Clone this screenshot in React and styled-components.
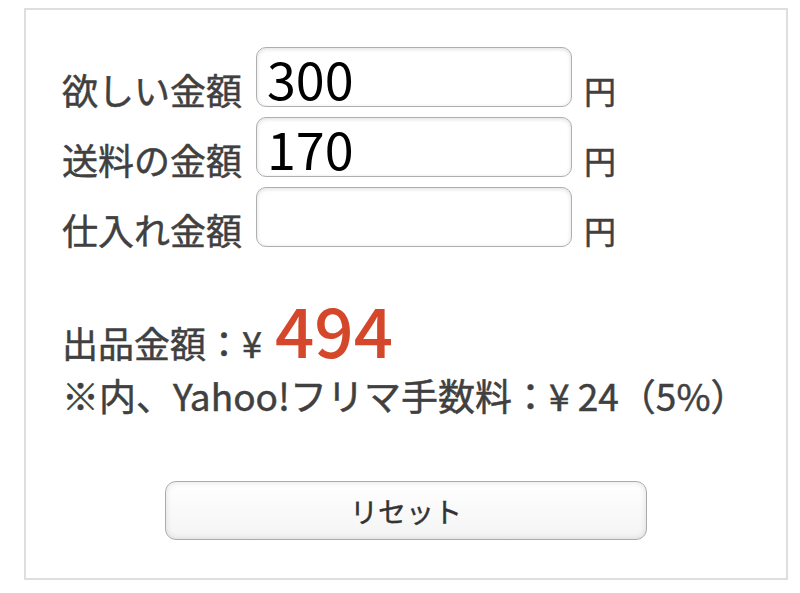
import React, { useState } from 'react';
import styled, { createGlobalStyle } from 'styled-components';

const GlobalStyle = createGlobalStyle`
body{
  margin: 8px 0 0 24px;
  background: #fff;
  font-family: "Noto Sans CJK JP", "Noto Sans", sans-serif;
}
`

function App() {
    const [want, setWant] = useState('300')
    const [ship, setShip] = useState('170')
    const [cost, setCost] = useState('')

    const w = Number(want) || 0
    const s = Number(ship) || 0
    const c = Number(cost) || 0
    const price = Math.floor((w + s + c) / 0.95)
    const fee = Math.floor(price * 0.05)

    const reset = () => { setWant(''); setShip(''); setCost('') }

    return (
        <Card>
            <GlobalStyle />
            <Row>
                <Label>欲しい金額</Label>
                <Field value={want} onChange={e => setWant(e.target.value)} />
                <Unit>円</Unit>
            </Row>
            <Row>
                <Label>送料の金額</Label>
                <Field value={ship} onChange={e => setShip(e.target.value)} />
                <Unit>円</Unit>
            </Row>
            <Row>
                <Label>仕入れ金額</Label>
                <Field value={cost} onChange={e => setCost(e.target.value)} />
                <Unit>円</Unit>
            </Row>
            <Result>
                出品金額：¥<Price>{price}</Price>
            </Result>
            <Note>※内、Yahoo!フリマ手数料：¥&nbsp;{fee}（5%）</Note>
            <ButtonWrap>
                <ResetButton onClick={reset}>リセット</ResetButton>
            </ButtonWrap>
        </Card>
    );
}

export default App;

const Card = styled.div`
width: 764px;
box-sizing: border-box;
border: 2px solid #dedede;
padding: 37px 0 38px 36px;
color: #404040;
-webkit-text-stroke: 0.5px #404040;
`
const Row = styled.div`
display: flex;
align-items: flex-end;
margin-bottom: 10px;
`
const Label = styled.span`
font-size: 36px;
line-height: 36px;
width: 194px;
white-space: nowrap;
`
const Field = styled.input`
box-sizing: border-box;
width: 316px;
height: 60px;
border: 1.5px solid #afafaf;
border-radius: 10px;
box-shadow: inset 0 1px 4px rgba(0,0,0,0.14);
padding: 0 10px;
font-family: "Noto Sans CJK JP", "Noto Sans", sans-serif;
font-size: 52px;
color: #000;
-webkit-text-stroke: 0;
outline: none;
background: #fff;
`
const Unit = styled.span`
font-size: 32px;
line-height: 32px;
margin-left: 12px;
margin-bottom: 1px;
`
const Result = styled.div`
display: flex;
align-items: baseline;
margin-top: 46px;
font-size: 36px;
line-height: 70px;
`
const Price = styled.span`
font-size: 69px;
line-height: 70px;
font-weight: 500;
color: #d4472b;
-webkit-text-stroke: 0;
margin-left: 13px;
`
const Note = styled.div`
font-size: 37px;
line-height: 36px;
margin-top: 0;
white-space: nowrap;
`
const ButtonWrap = styled.div`
display: flex;
justify-content: center;
padding-right: 36px;
margin-top: 68px;
`
const ResetButton = styled.button`
width: 482px;
height: 59px;
border: 1.5px solid #ababab;
border-radius: 11px;
background: linear-gradient(#ffffff, #f4f4f4);
box-shadow: inset 0 0 6px rgba(0,0,0,0.12);
font-family: "Noto Sans CJK JP", "Noto Sans", sans-serif;
font-size: 28px;
color: #333;
-webkit-text-stroke: 0.4px #333;
cursor: pointer;
`
